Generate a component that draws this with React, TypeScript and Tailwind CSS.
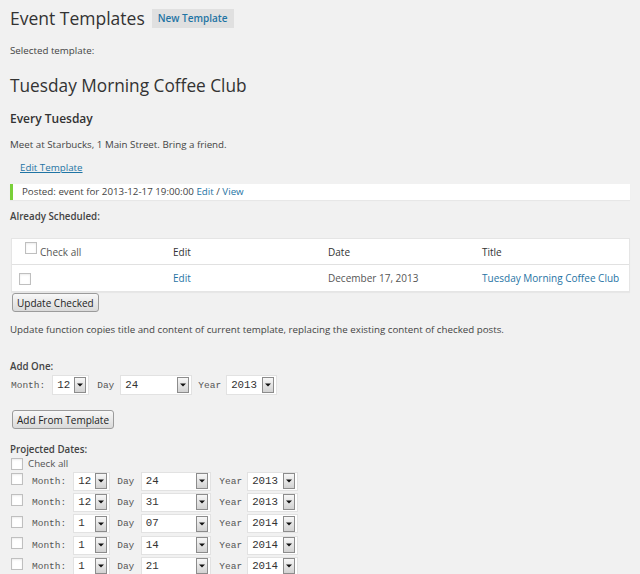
import React from "react";

const link = "text-[#1f74a4]";

function Checkbox({ className = "" }: { className?: string }) {
  return (
    <span
      className={`inline-block h-[12px] w-[12px] shrink-0 border border-[#bfbfbf] bg-white shadow-[inset_0_1px_2px_rgba(0,0,0,0.08)] ${className}`}
    />
  );
}

function Btn({ label, className = "" }: { label: string; className?: string }) {
  return (
    <button
      type="button"
      className={`flex h-[19px] items-center rounded-[3px] border border-[#9b9b9b] bg-gradient-to-b from-[#f8f8f8] to-[#dadada] px-[4px] text-[10px] leading-none text-[#222] ${className}`}
    >
      {label}
    </button>
  );
}

// fake select: white box with the little arrow button on the right
function Select({ value, width, height }: { value: string; width: string; height: string }) {
  return (
    <div
      className={`flex shrink-0 items-center border border-[#e2e2e2] bg-white pl-[4px] pr-[2px] font-['Liberation_Mono',monospace] text-[10.75px] text-[#333] ${width} ${height}`}
    >
      <span className="flex-1 leading-none">{value}</span>
      <span className="flex h-[16px] w-[12px] items-center justify-center border border-[#8c8c8c] bg-gradient-to-b from-[#f7f7f7] to-[#d2d2d2]">
        <svg width="6" height="4" viewBox="0 0 6 4">
          <path d="M0 0.5h6L3 3.5z" fill="#111" />
        </svg>
      </span>
    </div>
  );
}

const mono = "font-['Liberation_Mono',monospace] text-[9.5px] text-[#555] leading-[19px]";

const projected = [
  { m: "12", d: "24", y: "2013" },
  { m: "12", d: "31", y: "2013" },
  { m: "1", d: "07", y: "2014" },
  { m: "1", d: "14", y: "2014" },
  { m: "1", d: "21", y: "2014" },
];

export default function App() {
  return (
    <div className="min-h-screen bg-[#f1f1f1] px-[10px] pt-[9px] font-['Open_Sans',sans-serif] text-[9.75px] text-[#444]">
      {/* header */}
      <div className="flex h-[19px] items-center">
        <h2 className="text-[17.5px] leading-[19px] text-[#333]">Event Templates</h2>
        <span className={`ml-[7px] flex h-[19px] items-center bg-[#e0e0e0] px-[6px] text-[10px] font-semibold ${link}`}>
          New Template
        </span>
      </div>

      <p className="mt-[16px] leading-[14px]">Selected template:</p>

      <h2 className="mt-[16px] text-[17.25px] leading-[23px] text-[#333]">Tuesday Morning Coffee Club</h2>

      <h3 className="mt-[14px] text-[12px] font-semibold leading-[16px] text-[#333]">Every Tuesday</h3>

      <p className="mt-[10.5px] leading-[14px]">Meet at Starbucks, 1 Main Street. Bring a friend.</p>

      <p className="ml-[10px] mt-[9px] leading-[14px]">
        <span className={`${link} underline`}>Edit Template</span>
      </p>

      {/* notice */}
      <div className="mt-[9.5px] flex h-[16px] items-center border-l-[3px] border-[#7ad03a] bg-white pl-[9px] leading-[16px] shadow-[0_1px_1px_rgba(0,0,0,0.04)]">
        Posted: event for 2013-12-17 19:00:00&nbsp;<span className={link}>Edit</span>&nbsp;/&nbsp;
        <span className={link}>View</span>
      </div>

      <p className="mt-[10px] font-semibold leading-[14px]">Already Scheduled:</p>

      {/* scheduled table */}
      <div className="ml-[1px] mt-[13.5px] border border-[#e5e5e5] bg-white text-[10px] leading-[14px] shadow-[0_1px_1px_rgba(0,0,0,0.04)]">
        <div className="flex h-[26px] items-start border-b border-[#e1e1e1]">
          <div className="flex w-[161px] items-start pl-[13px]">
            <Checkbox className="mt-[3.5px]" />
            <span className="ml-[3px] pt-[6px] text-[#555]">Check all</span>
          </div>
          <div className="w-[155px] pt-[6px] text-[#333]">Edit</div>
          <div className="w-[154px] pt-[6px] text-[#333]">Date</div>
          <div className="flex-1 pt-[6px] text-[#333]">Title</div>
        </div>
        <div className="flex h-[26px] items-start">
          <div className="w-[161px] pl-[7px]">
            <Checkbox className="mt-[8.5px]" />
          </div>
          <div className={`w-[155px] pt-[6.7px] ${link}`}>Edit</div>
          <div className="w-[154px] pt-[6.7px] text-[#555]">December 17, 2013</div>
          <div className={`flex-1 pt-[6.7px] ${link}`}>Tuesday Morning Coffee Club</div>
        </div>
      </div>

      <Btn label="Update Checked" className="ml-[2px] mt-[1.5px]" />

      <p className="mt-[11px] leading-[14px]">
        Update function copies title and content of current template, replacing the existing content of checked posts.
      </p>

      <p className="mt-[22.5px] font-semibold leading-[14px]">Add One:</p>
      <div className="mt-[1.5px] flex h-[20px] items-center">
        <span className={`ml-[1px] ${mono}`}>Month:</span>
        <div className="ml-[7px]">
          <Select value="12" width="w-[37px]" height="h-[20px]" />
        </div>
        <span className={`ml-[8px] ${mono}`}>Day</span>
        <div className="ml-[6px]">
          <Select value="24" width="w-[72px]" height="h-[20px]" />
        </div>
        <span className={`ml-[6px] ${mono}`}>Year</span>
        <div className="ml-[5px]">
          <Select value="2013" width="w-[51px]" height="h-[20px]" />
        </div>
      </div>

      <Btn label="Add From Template" className="ml-[2px] mt-[15px]" />

      <p className="mt-[13.5px] font-semibold leading-[14px]">Projected Dates:</p>
      <div className="flex h-[14px] items-start">
        <Checkbox className="ml-[1px] mt-[1px]" />
        <span className="ml-[5px] leading-[14px] text-[#555]">Check all</span>
      </div>

      {projected.map((row, i) => (
        <div key={i} className="flex h-[21.33px] items-center">
          <Checkbox className="mb-[4.4px] ml-[1px]" />
          <span className={`ml-[9px] ${mono}`}>Month:</span>
          <div className="ml-[7px]">
            <Select value={row.m} width="w-[36.5px]" height="h-[19px]" />
          </div>
          <span className={`ml-[7.5px] ${mono}`}>Day</span>
          <div className="ml-[6.5px]">
            <Select value={row.d} width="w-[70px]" height="h-[19px]" />
          </div>
          <span className={`ml-[8.5px] ${mono}`}>Year</span>
          <div className="ml-[5px]">
            <Select value={row.y} width="w-[51px]" height="h-[19px]" />
          </div>
        </div>
      ))}
    </div>
  );
}
